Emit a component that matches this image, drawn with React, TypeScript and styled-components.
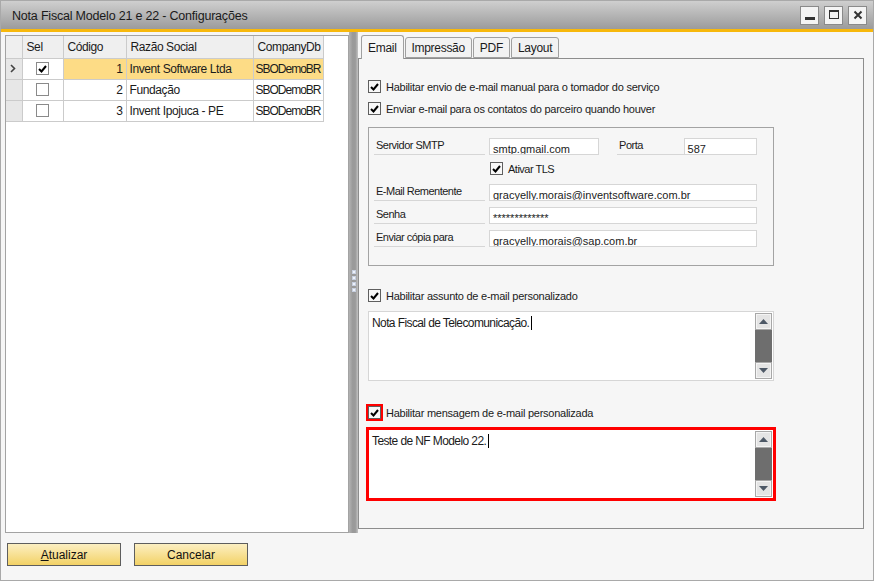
import styled, { createGlobalStyle } from "styled-components";

const GlobalStyle = createGlobalStyle`
  html, body {
    margin: 0;
    padding: 0;
    background: #ffffff;
  }
  body {
    font-family: "Liberation Sans", Arial, sans-serif;
    color: #1b1b1b;
  }
`;

const Window = styled.div`
  width: 874px;
  height: 581px;
  box-sizing: border-box;
  border: 1px solid #a9a9a9;
  background: #f6f6f6;
  display: flex;
  flex-direction: column;
`;

const TitleBar = styled.div`
  height: 28px;
  flex: none;
  display: flex;
  align-items: center;
  justify-content: space-between;
  padding: 0 6px 0 11px;
  background: linear-gradient(#cfcfcf, #9b9b9b);
  border-bottom: 3px solid #f7b80c;
`;

const Title = styled.span`
  font-size: 12.5px;
  letter-spacing: -0.2px;
  color: #1a1a1a;
  padding-top: 1px;
`;

const WinButtons = styled.div`
  display: flex;
  gap: 5px;
`;

const WinButton = styled.div`
  width: 17px;
  height: 17px;
  border: 1px solid #8a8a8a;
  background: #f4f4f4;
  display: flex;
  align-items: center;
  justify-content: center;
`;

const Main = styled.div`
  height: 501px;
  flex: none;
  display: flex;
  padding-left: 4px;
`;

const Grid = styled.div`
  margin-top: 3px;
  width: 344px;
  height: 498px;
  box-sizing: border-box;
  border: 1px solid #a3a3a3;
  background: #ffffff;
`;

const Table = styled.table`
  width: 317px;
  border-collapse: collapse;
  table-layout: fixed;
  font-size: 12px;
  letter-spacing: -0.4px;
`;

const Th = styled.th<{ w: number }>`
  width: ${(p) => p.w}px;
  height: 22px;
  padding: 0 0 0 4px;
  box-sizing: border-box;
  text-align: left;
  font-weight: normal;
  background: #efefef;
  border-right: 1px solid #cbcbcb;
  border-bottom: 1px solid #cbcbcb;
  white-space: nowrap;
`;

const Td = styled.td<{ sel?: boolean; right?: boolean; ind?: boolean; tight?: boolean }>`
  height: 21px;
  padding: ${(p) => (p.tight ? "0 0 0 2px" : "0 3px")};
  letter-spacing: ${(p) => (p.tight ? "-1px" : "inherit")};
  box-sizing: border-box;
  text-align: ${(p) => (p.right ? "right" : "left")};
  background: ${(p) => (p.ind ? "#e7e7e7" : p.sel ? "#fddc86" : "#ffffff")};
  border-right: 1px solid #cbcbcb;
  border-bottom: 1px solid #cbcbcb;
  white-space: nowrap;
  overflow: hidden;
`;

const CheckCell = styled.div`
  display: flex;
  justify-content: center;
  align-items: center;
`;

const GridCheck = styled.div`
  width: 11px;
  height: 11px;
  border: 1px solid #8a8a8a;
  background: #ffffff;
  display: flex;
  align-items: center;
  justify-content: center;
`;

const Splitter = styled.div`
  width: 9px;
  flex: none;
  background: linear-gradient(90deg, #b3b3b3, #9a9a9a 40%, #9a9a9a 70%, #c2c2c2);
  display: flex;
  flex-direction: column;
  align-items: center;
  justify-content: center;
  gap: 2px;
  padding-bottom: 3px;
  box-sizing: border-box;
`;

const Grip = styled.div`
  width: 2px;
  height: 2px;
  border: 1px solid #c8d0e0;
  background: #eef2fa;
`;

const RightPane = styled.div`
  flex: 1;
  display: flex;
  flex-direction: column;
  padding: 3px 9px 4px 0;
`;

const Tabs = styled.div`
  display: flex;
  align-items: flex-end;
  height: 23px;
  padding-left: 3px;
  position: relative;
  z-index: 1;
`;

const Tab = styled.div<{ active?: boolean }>`
  height: ${(p) => (p.active ? "24px" : "21px")};
  margin-bottom: ${(p) => (p.active ? "-1px" : "0")};
  box-sizing: border-box;
  padding: 0 6px;
  margin-right: 1px;
  display: flex;
  align-items: center;
  font-size: 12px;
  letter-spacing: -0.3px;
  background: ${(p) => (p.active ? "#f6f6f6" : "#f2f2f2")};
  border: 1px solid #a0a0a0;
  border-bottom: ${(p) => (p.active ? "none" : "1px solid #a0a0a0")};
  border-radius: 3px 3px 0 0;
`;

const Panel = styled.div`
  flex: 1;
  border: 1px solid #8d8d8d;
  background: #f6f6f6;
  padding: 21px 0 0 9px;
  display: flex;
  flex-direction: column;
  align-items: flex-start;
`;

const CheckRow = styled.div<{ mt?: number }>`
  display: flex;
  align-items: center;
  gap: 5px;
  height: 13px;
  margin-top: ${(p) => p.mt ?? 0}px;
  font-size: 11px;
  letter-spacing: -0.25px;
`;

const Box = styled.div<{ red?: boolean }>`
  width: 13px;
  height: 13px;
  box-sizing: border-box;
  border: 1px solid #5f5f5f;
  background: #f8f8f8;
  display: flex;
  align-items: center;
  justify-content: center;
  flex: none;
  outline: ${(p) => (p.red ? "2px solid #ff0000" : "none")};
`;

const Group = styled.div`
  margin-top: 12px;
  width: 406px;
  height: 139px;
  box-sizing: border-box;
  border: 1px solid #a3a3a3;
  padding: 10px 0 0 5px;
  display: grid;
  grid-template-columns: 111px 268px;
  column-gap: 4px;
  row-gap: 6px;
  align-content: start;
  font-size: 11px;
`;

const Label = styled.div<{ line?: boolean; w?: number }>`
  width: ${(p) => (p.w ? `${p.w}px` : "auto")};
  height: 17px;
  box-sizing: border-box;
  padding: 1px 0 0 2px;
  letter-spacing: -0.5px;
  border-bottom: ${(p) => (p.line === false ? "none" : "1px solid #d6d6d6")};
`;

const Field = styled.div<{ w?: number }>`
  width: ${(p) => (p.w ? `${p.w}px` : "auto")};
  height: 17px;
  box-sizing: border-box;
  border: 1px solid #d6d6d6;
  background: #ffffff;
  padding: 3px 0 0 3px;
  line-height: 14px;
  overflow: hidden;
  white-space: nowrap;
`;

const FieldPair = styled.div`
  display: flex;
  gap: 18px;
`;

const PortaField = styled(Field)`
  margin-left: -18px;
`;

const TlsRow = styled.div`
  height: 15px;
  display: flex;
  align-items: center;
  gap: 5px;
  padding-left: 1px;
  font-size: 11px;
  letter-spacing: -0.5px;
`;

const Memo = styled.div<{ red?: boolean; mt: number }>`
  margin-top: ${(p) => p.mt}px;
  width: 406px;
  height: 70px;
  box-sizing: border-box;
  border: 1px solid #d6d6d6;
  background: #ffffff;
  display: flex;
  outline: ${(p) => (p.red ? "3px solid #ff0000" : "none")};
  outline-offset: -1px;
`;

const MemoText = styled.div`
  flex: 1;
  padding: 4px 0 0 3px;
  font-size: 12px;
  letter-spacing: -0.6px;
  line-height: 14px;
`;

const Caret = styled.span`
  display: inline-block;
  width: 1px;
  height: 14px;
  background: #000;
  vertical-align: top;
  margin-left: 2px;
`;

const ScrollBar = styled.div`
  width: 17px;
  margin: 1px 1px 1px 0;
  display: flex;
  flex-direction: column;
`;

const ScrollBtn = styled.div`
  height: 17px;
  box-sizing: border-box;
  border: 1px solid #a8a8a8;
  box-shadow: inset 0 0 0 1px #f4f4f4;
  background: #e4e4e4;
  display: flex;
  align-items: center;
  justify-content: center;
`;

const Thumb = styled.div`
  flex: 1;
  background: #6e6e6e;
`;

const Footer = styled.div`
  flex: 1;
  display: flex;
  gap: 13px;
  padding: 10px 0 0 6px;
  align-items: flex-start;
`;

const Button = styled.div`
  width: 114px;
  height: 23px;
  box-sizing: border-box;
  border: 1px solid #5e5e5e;
  background: linear-gradient(#fcefc2, #f3d266);
  display: flex;
  align-items: center;
  justify-content: center;
  font-size: 12px;
  color: #111;
`;

const Tick = () => (
  <svg width="9" height="8" viewBox="0 0 9 8">
    <path d="M1 4 L3.5 6.5 L8 1" stroke="#000" strokeWidth="2" fill="none" />
  </svg>
);

const Arrow = ({ down }: { down?: boolean }) => (
  <svg width="9" height="5" viewBox="0 0 9 5">
    <path d={down ? "M0 0 H9 L4.5 5 Z" : "M0 5 H9 L4.5 0 Z"} fill="#4d5866" />
  </svg>
);

const Check = ({ red }: { red?: boolean }) => (
  <Box red={red}>
    <Tick />
  </Box>
);

const Scroll = () => (
  <ScrollBar>
    <ScrollBtn>
      <Arrow />
    </ScrollBtn>
    <Thumb />
    <ScrollBtn>
      <Arrow down />
    </ScrollBtn>
  </ScrollBar>
);

const rows = [
  { id: 1, name: "Invent Software Ltda", db: "SBODemoBR", checked: true },
  { id: 2, name: "Fundação", db: "SBODemoBR", checked: false },
  { id: 3, name: "Invent Ipojuca - PE", db: "SBODemoBR", checked: false },
];

const App = () => {
  return (
    <>
      <GlobalStyle />
      <Window>
        <TitleBar>
          <Title>Nota Fiscal Modelo 21 e 22 - Configurações</Title>
          <WinButtons>
            <WinButton>
              <svg width="12" height="12" viewBox="0 0 12 12">
                <rect x="1" y="8" width="10" height="3" fill="#333" />
              </svg>
            </WinButton>
            <WinButton>
              <svg width="12" height="12" viewBox="0 0 12 12">
                <rect x="1.5" y="1.5" width="9" height="8" fill="none" stroke="#333" />
                <rect x="1" y="1" width="10" height="2" fill="#333" />
              </svg>
            </WinButton>
            <WinButton>
              <svg width="12" height="12" viewBox="0 0 12 12">
                <path d="M2.5 2.5 L9.5 9.5 M9.5 2.5 L2.5 9.5" stroke="#333" strokeWidth="2" />
              </svg>
            </WinButton>
          </WinButtons>
        </TitleBar>

        <Main>
          <Grid>
            <Table>
              <thead>
                <tr>
                  <Th w={16} />
                  <Th w={41}>Sel</Th>
                  <Th w={63}>Código</Th>
                  <Th w={127}>Razão Social</Th>
                  <Th w={70}>CompanyDb</Th>
                </tr>
              </thead>
              <tbody>
                {rows.map((r) => (
                  <tr key={r.id}>
                    <Td ind>
                      {r.id === 1 && (
                        <svg width="8" height="9" viewBox="0 0 8 9">
                          <path d="M2 1 L5.5 4.5 L2 8" stroke="#444" strokeWidth="1.6" fill="none" />
                        </svg>
                      )}
                    </Td>
                    <Td>
                      <CheckCell>
                        <GridCheck>{r.checked && <Tick />}</GridCheck>
                      </CheckCell>
                    </Td>
                    <Td right sel={r.id === 1}>
                      {r.id}
                    </Td>
                    <Td sel={r.id === 1}>{r.name}</Td>
                    <Td tight sel={r.id === 1}>
                      {r.db}
                    </Td>
                  </tr>
                ))}
              </tbody>
            </Table>
          </Grid>

          <Splitter>
            <Grip />
            <Grip />
            <Grip />
            <Grip />
          </Splitter>

          <RightPane>
            <Tabs>
              <Tab active>Email</Tab>
              <Tab>Impressão</Tab>
              <Tab>PDF</Tab>
              <Tab>Layout</Tab>
            </Tabs>
            <Panel>
              <CheckRow>
                <Check />
                Habilitar envio de e-mail manual para o tomador do serviço
              </CheckRow>
              <CheckRow mt={9}>
                <Check />
                Enviar e-mail para os contatos do parceiro quando houver
              </CheckRow>

              <Group>
                <Label>Servidor SMTP</Label>
                <FieldPair>
                  <Field w={111}>smtp.gmail.com</Field>
                  <Label w={67}>Porta</Label>
                  <PortaField w={74}>587</PortaField>
                </FieldPair>
                <Label line={false} />
                <TlsRow>
                  <Check />
                  Ativar TLS
                </TlsRow>
                <Label>E-Mail Rementente</Label>
                <Field>gracyelly.morais@inventsoftware.com.br</Field>
                <Label>Senha</Label>
                <Field>*************</Field>
                <Label>Enviar cópia para</Label>
                <Field>gracyelly.morais@sap.com.br</Field>
              </Group>

              <CheckRow mt={23}>
                <Check />
                Habilitar assunto de e-mail personalizado
              </CheckRow>
              <Memo mt={9}>
                <MemoText>
                  Nota Fiscal de Telecomunicação.
                  <Caret />
                </MemoText>
                <Scroll />
              </Memo>

              <CheckRow mt={25}>
                <Check red />
                Habilitar mensagem de e-mail personalizada
              </CheckRow>
              <Memo mt={10} red>
                <MemoText>
                  Teste de NF Modelo 22.
                  <Caret />
                </MemoText>
                <Scroll />
              </Memo>
            </Panel>
          </RightPane>
        </Main>

        <Footer>
          <Button>
            <u>A</u>tualizar
          </Button>
          <Button>Cancelar</Button>
        </Footer>
      </Window>
    </>
  );
};

export default App;
